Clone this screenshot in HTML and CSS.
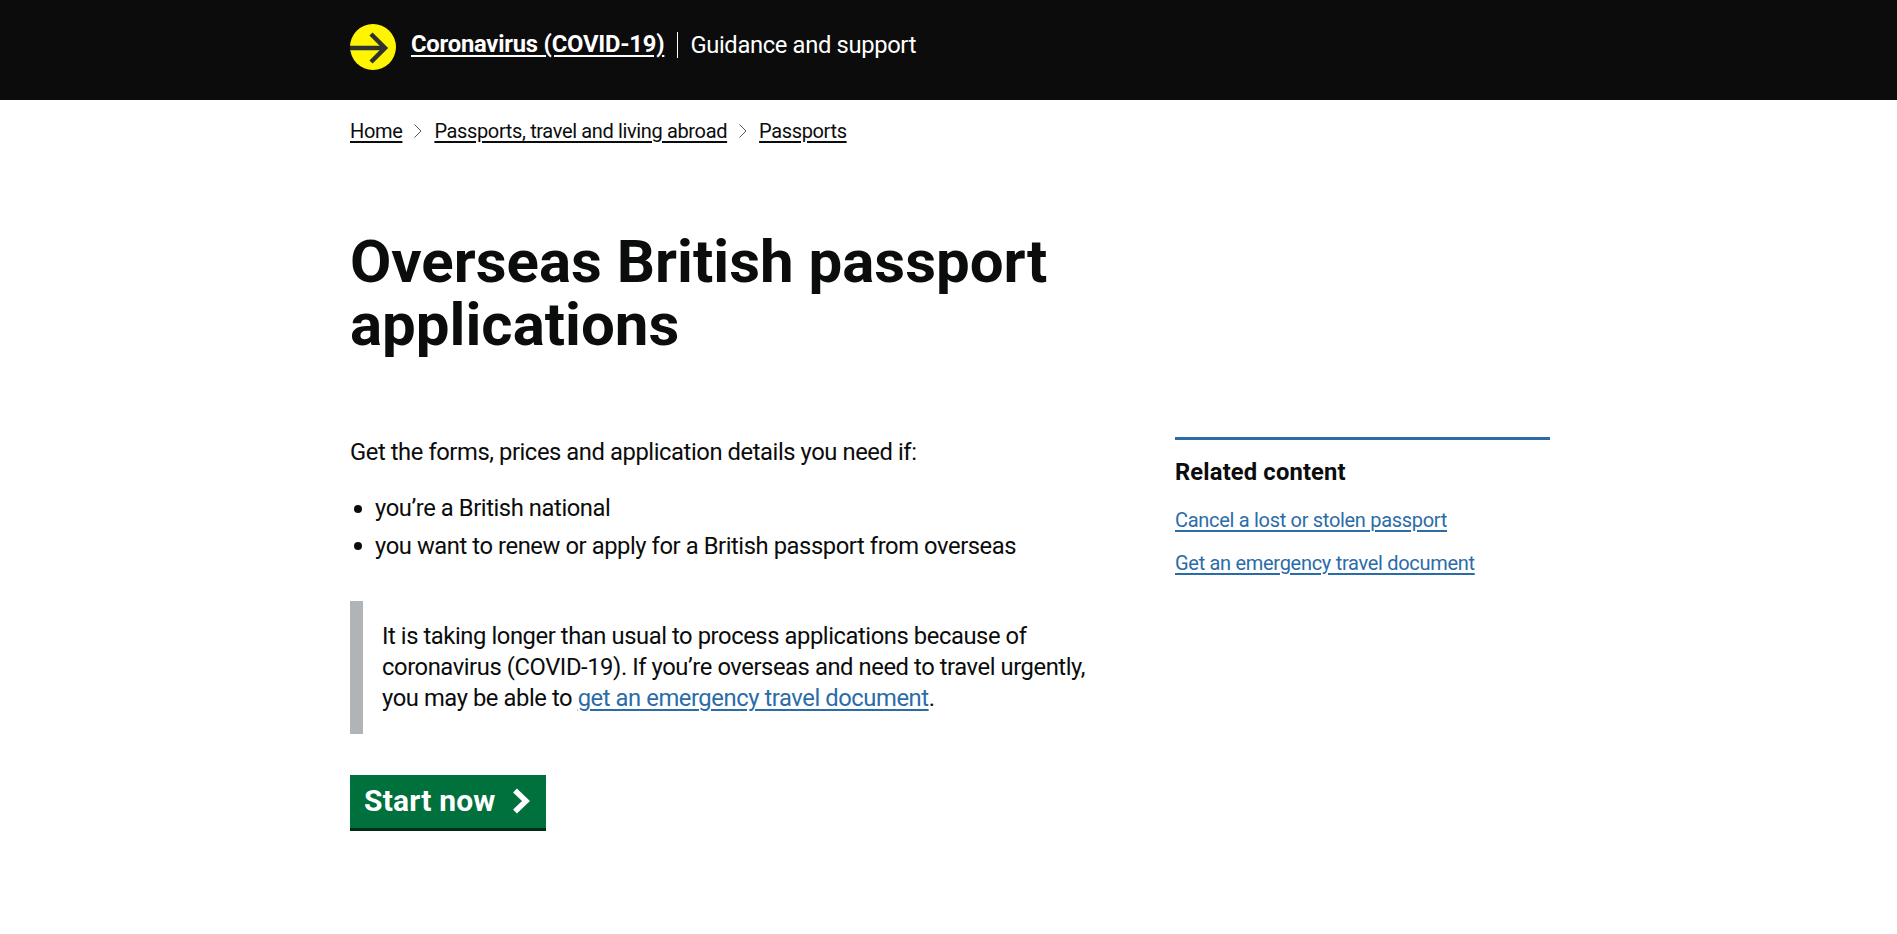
FILE: index.html
```html
<!DOCTYPE html>
<html lang="en">
<head>
    <meta charset="UTF-8">
    <title>Overseas British passport applications</title>
    <link rel="stylesheet" href="styles.css">
</head>
<body>

    <!-- Coronavirus banner -->
    <header class="banner">
        <div class="wrap banner-row">
            <svg class="banner-logo" viewBox="0 0 46 46" width="46" height="46" aria-hidden="true">
                <circle cx="23" cy="23" r="23" fill="#fff500"/>
                <path d="M0 24H35M21 10L35 24L21 38" fill="none" stroke="#2f3030" stroke-width="4.500"/>
            </svg>
            <a class="banner-link" href="#">Coronavirus (COVID-19)</a>
            <span class="banner-sub">Guidance and support</span>
        </div>
    </header>

    <div class="wrap">
        <!-- Breadcrumbs -->
        <nav class="breadcrumbs">
            <a href="#">Home</a>
            <svg class="crumb-arrow" viewBox="0 0 10 16" width="10" height="16" aria-hidden="true"><path d="M1.500 1.500L8 8L1.500 14.500" fill="none" stroke="#505a5f" stroke-width="1"/></svg>
            <a href="#">Passports, travel and living abroad</a>
            <svg class="crumb-arrow" viewBox="0 0 10 16" width="10" height="16" aria-hidden="true"><path d="M1.500 1.500L8 8L1.500 14.500" fill="none" stroke="#505a5f" stroke-width="1"/></svg>
            <a href="#">Passports</a>
        </nav>

        <h1 class="title">Overseas British passport applications</h1>

        <div class="columns">
            <main class="content">
                <p class="intro">Get the forms, prices and application details you need if:</p>
                <ul class="bullets">
                    <li>you’re a British national</li>
                    <li>you want to renew or apply for a British passport from overseas</li>
                </ul>
                <div class="inset">
                    It is taking longer than usual to process applications because of coronavirus (COVID-19). If you’re overseas and need to travel urgently, you may be able to <a href="#">get an emergency travel document</a>.
                </div>
                <a class="start-btn" href="#">
                    Start now
                    <svg viewBox="0 0 24 28" width="24" height="28" aria-hidden="true"><path d="M4 3.500L15 14L4 24.500" fill="none" stroke="#fff" stroke-width="5.500"/></svg>
                </a>
            </main>

            <aside class="related">
                <h2>Related content</h2>
                <a href="#">Cancel a lost or stolen passport</a>
                <a href="#">Get an emergency travel document</a>
            </aside>
        </div>
    </div>

</body>
</html>
```

FILE: styles.css
```css
/* General Reset */
* {
    margin: 0;
    padding: 0;
    box-sizing: border-box;
}

body {
    font-family: 'Roboto', sans-serif;
    background-color: white;
    color: #0b0c0c;
}

.wrap {
    width: 1200px;
    margin-left: 350px;
}

/* Banner */
.banner {
    background-color: #0c0c0c;
    height: 100px;
    color: white;
}

.banner-row {
    display: flex;
    align-items: flex-start;
    padding-top: 24px;
}

.banner-logo {
    margin-right: 15px;
}

.banner-link {
    margin-top: 5px;
    color: white;
    font-size: 23.750px;
    font-weight: 700;
    letter-spacing: -0.2px;
    line-height: 30px;
    text-decoration: underline;
    text-underline-offset: 3px;
}

.banner-sub {
    font-size: 23.750px;
    letter-spacing: -0.35px;
    line-height: 26px;
    margin-top: 8px;
    margin-left: 13px;
    padding-left: 12px;
    border-left: 1px solid white;
}

/* Breadcrumbs */
.breadcrumbs {
    display: flex;
    align-items: center;
    height: 26px;
    margin-top: 18px;
    font-size: 20px;
    letter-spacing: -0.36px;
}

.breadcrumbs a {
    color: #0b0c0c;
    text-underline-offset: 3px;
}

.crumb-arrow {
    margin: 0 11px;
}

/* Title */
.title {
    width: 800px;
    margin-top: 87px;
    font-size: 60px;
    font-weight: 700;
    line-height: 62.500px;
}

/* Columns */
.columns {
    display: flex;
    margin-top: 81px;
}

.content {
    width: 825px;
    font-size: 23.750px;
    letter-spacing: -0.42px;
    line-height: 31.250px;
}

.intro {
    margin-bottom: 25px;
}

.bullets {
    list-style: none;
    margin-bottom: 39px;
}

.bullets li {
    display: flex;
    align-items: center;
    gap: 13px;
    margin-bottom: 6px;
}

.bullets li::before {
    content: "";
    width: 8px;
    height: 8px;
    margin-left: 4px;
    border-radius: 50%;
    background-color: #0b0c0c;
}

.inset {
    width: 752px;
    padding: 20px 0 19px 19px;
    border-left: 13px solid #b1b4b6;
}

.inset a {
    color: #2b6ca8;
    text-underline-offset: 3px;
}

.start-btn {
    display: inline-flex;
    align-items: center;
    gap: 15px;
    margin-top: 41px;
    padding: 0 11px 0 14px;
    height: 56px;
    background-color: #00703c;
    border-bottom: 3px solid #002d18;
    color: white;
    font-size: 30px;
    font-weight: 700;
    letter-spacing: 0.2px;
    text-decoration: none;
}

/* Related */
.related {
    width: 375px;
    height: 180px;
    border-top: 3px solid #2b6ca8;
    padding-top: 17px;
}

.related h2 {
    font-size: 23.750px;
    font-weight: 700;
    letter-spacing: 0.15px;
    line-height: 31px;
    margin-bottom: 19px;
}

.related a {
    display: block;
    color: #2b6ca8;
    font-size: 20px;
    letter-spacing: -0.3px;
    line-height: 26px;
    margin-bottom: 17px;
    text-underline-offset: 3px;
}
```
